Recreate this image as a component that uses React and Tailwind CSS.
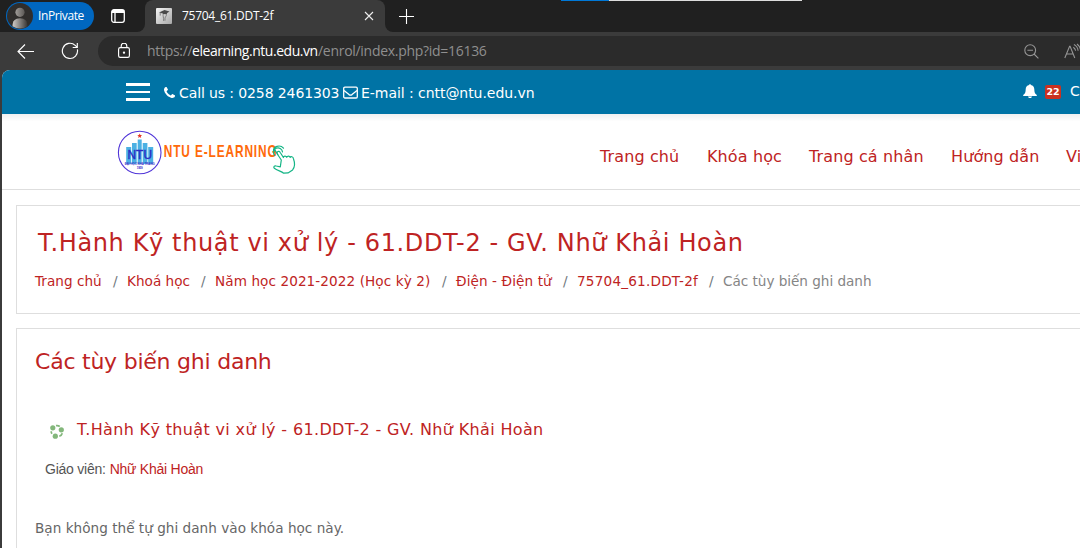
const crumbs = [
  ["Trang chủ", "w-[78px] tracking-[0.03px]"],
  ["Khoá học", "w-[74px] tracking-[0.02px]"],
  ["Năm học 2021-2022 (Học kỳ 2)", "w-[227px] tracking-[0.08px]"],
  ["Điện - Điện tử", "w-[107px] tracking-[0.1px]"],
  ["75704_61.DDT-2f", "w-[132px] tracking-[0.2px]"],
];

function Avatar() {
  return (
    <svg viewBox="0 0 26 26" className="size-[26px]">
      <defs>
        <linearGradient id="head" x1="0" x2="1">
          <stop offset="0" stopColor="#a09c98" />
          <stop offset="1" stopColor="#5c5956" />
        </linearGradient>
        <linearGradient id="body" x1="0" x2="1">
          <stop offset="0" stopColor="#d0ccc8" />
          <stop offset="1" stopColor="#383634" />
        </linearGradient>
      </defs>
      <circle cx="13" cy="13" r="13" fill="#302e2c" />
      <circle cx="13" cy="9.3" r="4.6" fill="url(#head)" />
      <path d="M5.5 23.2C5.5 18 8 15.3 13 15.3S20.5 18 20.5 23.2A13 13 0 0 1 5.5 23.2Z" fill="url(#body)" />
    </svg>
  );
}

function Browser() {
  return (
    <div className="font-['Open_Sans','Noto_Sans',sans-serif]">
      <div className="relative flex h-8 bg-[#3b3b3b]">
        <div className="flex w-[145px] items-center rounded-br-lg bg-[#202020] pl-1.5">
          <div className="flex h-7 w-[88px] items-center gap-1.5 rounded-full bg-[#0067c0] pl-px text-[12px] tracking-[-0.4px] text-white">
            <Avatar />
            <span className="-ml-px">InPrivate</span>
          </div>
          <svg viewBox="0 0 16 16" className="ml-4 size-4" fill="none" stroke="#fff" strokeWidth="1.3">
            <rect x="1.7" y="1.7" width="12.6" height="12.6" rx="2.2" />
            <path d="M1.7 4.4h12.6M5 4.4v9.8" />
            <path d="M2 3h12" strokeWidth="2" />
          </svg>
        </div>
        <div className="bg-[#202020]">
          <div className="flex h-8 w-60 items-center rounded-t-lg bg-[#3b3b3b] pl-[11px] text-[12px] text-white">
            <svg viewBox="0 0 16 16" className="size-4">
              <defs>
                <linearGradient id="fav" x2="1" y2="1">
                  <stop offset="0" stopColor="#f4f4f4" />
                  <stop offset="1" stopColor="#a8a8a8" />
                </linearGradient>
              </defs>
              <rect width="16" height="16" rx="1" fill="url(#fav)" />
              <path d="M3 4.4 8.5 2l5 1.6-2.3 1.4-.5 1.3-3.4-.2-.6-.6Z" fill="#4a4a4a" />
              <path d="M4.2 4.6v3M7.2 6c-.5 2 .6 3.5.5 7M10.4 6.2c.4 1.8-1.2 2.3-1.4 4v2.5" fill="none" stroke="#777" strokeWidth=".9" />
            </svg>
            <span className="ml-2.5 tracking-[-0.27px]">75704_61.DDT-2f</span>
            <svg viewBox="0 0 10 10" className="ml-auto mr-[11px] size-2.5" stroke="#eee" strokeWidth="1.1">
              <path d="m1 1 8 8M9 1 1 9" />
            </svg>
          </div>
        </div>
        <div className="flex flex-1 items-center rounded-bl-lg bg-[#202020] pl-3.5">
          <svg viewBox="0 0 15 15" className="size-[15px]" stroke="#fff" strokeWidth="1.1">
            <path d="M7.5 0v15M0 7.5h15" />
          </svg>
        </div>
        <div className="absolute left-[561px] top-0 flex h-px w-[241px] bg-[#ddd]">
          <div className="w-12 bg-[#0078d7]" />
        </div>
      </div>
      <div className="flex h-[38px] items-center bg-[#3b3b3b] pl-[17px]">
        <svg viewBox="0 0 17 16" className="size-[17px]" fill="none" stroke="#fff" strokeWidth="1.1">
          <path d="M17 8H1.2M8 1 1 8l7 7" />
        </svg>
        <svg viewBox="0 0 18 18" className="ml-[27px] size-[18px]" fill="none" stroke="#fff" strokeWidth="1.15">
          <path d="M16.4 7.4A7.6 7.6 0 1 1 14.2 3.4L16 5.2M16.3 1v4.5h-4.6" />
        </svg>
        <div className="ml-[19px] flex h-[30px] flex-1 items-center overflow-hidden rounded-l-full bg-[#2b2b2b] pl-5 text-[14px]">
          <svg viewBox="0 0 12 15" className="mb-0.5 h-[15px] w-3" fill="none" stroke="#fff" strokeWidth="1.15">
            <rect x=".6" y="4.6" width="10.8" height="9.8" rx="1.6" />
            <path d="M3.2 4.6V3a2.8 2.8 0 0 1 5.6 0v1.6" />
            <circle cx="6" cy="9.6" r=".6" fill="#fff" />
          </svg>
          <div className="mb-0.5 ml-[17px] flex whitespace-pre text-[#8f8f8f]">
            <span className="w-[45px] tracking-[-0.3px]">https://</span>
            <span className="w-[126px] tracking-[-0.46px] text-white">elearning.ntu.edu.vn</span>
            <span className="tracking-[-0.29px]">/enrol/index.php?id=16136</span>
          </div>
          <svg viewBox="0 0 15 15" className="ml-auto size-[15px]" fill="none" stroke="#959595" strokeWidth="1.1">
            <circle cx="6.2" cy="6.2" r="5.4" />
            <path d="M3.4 6.2h5.6M10 10l4.4 4.4" />
          </svg>
          <svg viewBox="0 0 18 16" className="ml-[25px] mr-[-2px] h-4 w-[18px] shrink-0" fill="none" stroke="#959595" strokeWidth="1.1">
            <path d="M.8 15 5.6 3.4h.5L10.8 15M2.4 11h6.8M9.3 4.2c1.4.9 2.1 2 2.3 3.6M9.9 1.6c2.4 1.2 3.9 3.2 4.2 6.1M13 1c2 1.5 3.3 3.6 3.7 6.4" />
          </svg>
        </div>
      </div>
    </div>
  );
}

function Logo() {
  return (
    <svg viewBox="0 0 182 48" className="h-12 w-[182px] shrink-0">
      <circle cx="22.7" cy="24.5" r="21.3" fill="#fff" stroke="#5136d8" strokeWidth="1.1" />
      <g fill="#4cb1e3" transform="translate(.7)">
        <path d="M8.5 19h5v17h-5zM14.3 15H19v21h-4.7zM20 11.5h4V36h-4zM25 15h4.7v21H25zM30.5 19h5v17h-5z" />
      </g>
      <path d="m22.7 5.500.7 1.6 1.7.1-1.3 1.1.4 1.7-1.5-.9-1.5.9.4-1.7-1.3-1.1 1.7-.1Z" fill="#e33528" />
      <text x="10.500" y="31.300" fontFamily="Liberation Sans" fontSize="13" textLength="24.500" lengthAdjust="spacingAndGlyphs" fill="#2a2bc4" stroke="#2a2bc4" strokeWidth=".4">NTU</text>
      <text x="7.7" y="36.8" fontFamily="Liberation Sans" fontSize="4" fontWeight="700" textLength="30" lengthAdjust="spacingAndGlyphs" fill="#3f2fc8">ĐẠI HỌC NHA TRANG</text>
      <text x="19.7" y="40.5" fontFamily="Liberation Sans" fontSize="3" fontWeight="700" textLength="6" fill="#3f2fc8">1959</text>
      <g transform="translate(46.7 28.5) scale(.72 1)">
        <text fontFamily="Liberation Sans" fontSize="16.5" fontWeight="700" textLength="157" fill="#ff6a0a">NTU E-LEARNING</text>
      </g>
      <g transform="translate(.8 0)" fill="none" stroke="#15b586" strokeWidth="1.2" strokeLinecap="round" strokeLinejoin="round">
        <path fill="#fff" d="m163.5 32-4-6c-1.2-2.2 1.6-3.8 2.8-1.7l3.3 5.2c.3-1.8 2.6-1.9 3.3-.2.7-1.7 3-1.5 3.4.1.8-1.3 2.9-.8 3.2.8 1.700 4.500 2.300 8-.7 11.700l-4.600 3-4.300.3c-2.300-2.200-6.400-2.400-9.400-4.900-1.300-1.400.2-3 2-2.300l4 .8Z" />
        <path d="M157 27.500a4.500 4.500 0 1 1 7.700-3.600M155.700 23c-.5-4.500 6.500-7 10-2.800M160 26.500l-3.600-5.600" />
      </g>
    </svg>
  );
}

function TopBar() {
  return (
    <div className="flex h-11 items-center bg-[#0073a5] pl-[124px] text-[14px] text-white">
      <div className="flex h-[18px] w-6 flex-col justify-between">
        <div className="h-[3px] bg-white" />
        <div className="h-0.5 bg-white" />
        <div className="h-[3px] bg-white" />
      </div>
      <svg viewBox="0 128 1408 1408" className="ml-3.5 size-[11px]" fill="#fff">
        <path d="M1408 1240q0 27-10 70.500t-21 68.500q-21 50-122 106-94 51-186 51-27 0-53-3.500t-57.500-12.500-47-14.500-55.500-20.500-49-18q-98-35-175-83-127-79-264-216t-216-264q-48-77-83-175-3-9-18-49t-20.500-55.500-14.500-47-12.500-57.500-3.500-53q0-92 51-186 56-101 106-122 25-11 68.500-21t70.500-10q14 0 21 3 18 6 53 76 11 19 30 54t35 63.500 31 53.500q3 4 17.500 25t21.500 35.500 7 28.500q0 20-28.500 50t-62 55-62 53-28.500 46q0 9 5 22.500t8.500 20.500 14 24 11.500 19q76 137 174 235t235 174q2 1 19 11.500t24 14 20.500 8.500 22.500 5q18 0 46-28.500t53-62 55-62 50-28.500q14 0 28.500 7t35.500 21.500 25 17.500q25 15 53.500 31t63.500 35 54 30q70 35 76 53 3 7 3 21z" />
      </svg>
      <span className="ml-1 w-[164px] whitespace-nowrap pt-0.5 tracking-[-0.11px]">Call us : 0258 2461303</span>
      <svg viewBox="0 0 15 13" className="h-[13px] w-[15px]" fill="none" stroke="#fff" strokeWidth="1.3">
        <rect x=".7" y="1.2" width="13.6" height="10.8" rx="1.2" />
        <path d="m1 4.5 5 4.1c1 .7 2 .7 3 0l5-4.1" />
      </svg>
      <span className="ml-[3px] whitespace-nowrap pt-0.5 tracking-[-0.05px]">E-mail : cntt@ntu.edu.vn</span>
      <svg viewBox="0 0 14 14" className="ml-auto mb-0.5 size-3.5" fill="#fff">
        <path d="M6.2 1c0-1.300 1.600-1.300 1.600 0 2.400.5 3.500 2.200 3.500 4.300 0 3.100.8 4.700 2.500 5.700v1H.2v-1c1.700-1 2.500-2.600 2.500-5.700C2.700 3.200 3.800 1.500 6.200 1ZM5 12.500h4c-.5 2-3.500 2-4 0Z" />
      </svg>
      <span className="ml-2 flex h-3.5 w-4 items-center justify-center rounded-[2px] bg-[#ca3120] text-[9.5px] font-bold">22</span>
      <span className="mb-0.5 ml-[9px] w-[10px]">C</span>
    </div>
  );
}

export default function App() {
  return (
    <div className="h-[548px] w-[1080px] overflow-hidden bg-[#3b3b3b] font-['DejaVu_Sans',sans-serif]">
      <Browser />
      <div className="ml-0.5 h-[478px] overflow-hidden rounded-tl-lg bg-white text-[#be2323]">
        <TopBar />
        <header className="flex h-[76px] items-start border-b border-[#dedede] bg-linear-to-b from-[#f0f0f0] to-white to-10% pl-[115px] pt-3.5">
          <Logo />
          <nav className="ml-[301px] mt-[17px] flex whitespace-nowrap text-[16px] leading-6 tracking-[0.12px]">
            <a className="w-[107px] shrink-0">Trang chủ</a>
            <a className="w-[102px] shrink-0">Khóa học</a>
            <a className="w-[142px] shrink-0">Trang cá nhân</a>
            <a className="w-[115px] shrink-0">Hướng dẫn</a>
            <a>Vi</a>
          </nav>
        </header>
        <main className="ml-3.5 mt-[15px] flex w-[1100px] flex-col gap-3.5">
          <section className="h-[109px] border border-[#dedede] pl-[18px] pt-[21px]">
            <h1 className="pl-[3px] text-[24px] leading-8 tracking-[0.63px]">
              T.Hành Kỹ thuật vi xử lý - 61.DDT-2 - GV. Nhữ Khải Hoàn
            </h1>
            <div className="mt-3 flex whitespace-nowrap text-[13.6px] leading-5">
              {crumbs.map(([label, cls]) => (
                <span key={label} className="flex">
                  <a className={cls}>{label}</a>
                  <span className="w-3.5 text-[#70777d]">/</span>
                </span>
              ))}
              <span className="tracking-[-0.03px] text-[#858585]">Các tùy biến ghi danh</span>
            </div>
          </section>
          <section className="h-[260px] border border-[#dedede] pl-[18px] pt-[17px]">
            <h2 className="text-[22px] leading-8 tracking-[-0.23px]">Các tùy biến ghi danh</h2>
            <div className="mt-10 flex items-center pl-3.5">
              <svg viewBox="0 0 16 16" className="mt-1 size-4" fill="#83b77b">
                <circle cx="3.8" cy="3.8" r="2.6" />
                <circle cx="12.3" cy="5.8" r="2.6" />
                <circle cx="6.3" cy="12.2" r="2.6" />
                <path d="M7 1.700c1.400-.3 2.700 0 3.800.8M2.200 7.200c0 1 .2 1.800.8 2.600M13.300 9.200c-.4 1.400-1.500 2.600-3 3.100" fill="none" stroke="#83b77b" strokeWidth="1.7" />
              </svg>
              <h3 className="ml-3 text-[16px] leading-6 tracking-[0.35px]">T.Hành Kỹ thuật vi xử lý - 61.DDT-2 - GV. Nhữ Khải Hoàn</h3>
            </div>
            <p className="mt-[17px] flex gap-1 pl-2.5 font-['Liberation_Sans',sans-serif] text-[14px] leading-5 tracking-[-0.24px] text-[#555]">
              Giáo viên:<a className="text-[#be2323]">Nhữ Khải Hoàn</a>
            </p>
            <p className="mt-[39px] text-[13.6px] leading-5 tracking-[0.02px] text-[#666]">Bạn không thể tự ghi danh vào khóa học này.</p>
          </section>
        </main>
      </div>
    </div>
  );
}
